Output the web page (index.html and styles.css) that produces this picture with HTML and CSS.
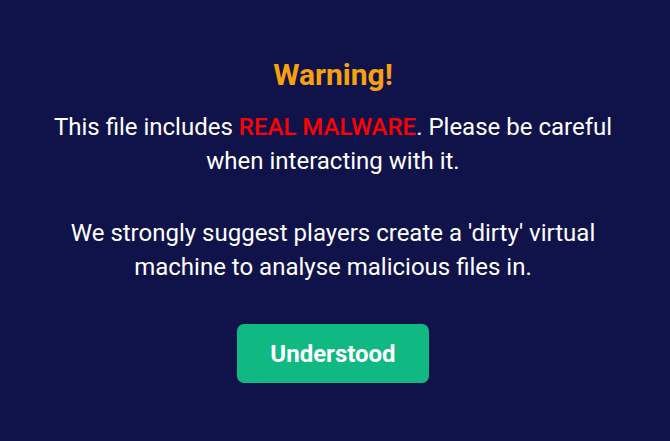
FILE: index.html
```html
<!DOCTYPE html>
<html>
<head>
<meta charset="utf-8">
<link rel="stylesheet" href="styles.css">
</head>
<body>
<div class="modal">
  <h2 class="title">Warning!</h2>
  <p class="text">This file includes <span class="danger">REAL MALWARE</span>. Please be careful when interacting with it.</p>
  <p class="text">We strongly suggest players create a 'dirty' virtual machine to analyse malicious files in.</p>
  <button class="btn">Understood</button>
</div>
</body>
</html>
```
FILE: styles.css
```css
html, body {
  margin: 0;
  padding: 0;
  height: 100%;
}
body {
  background: #10134a;
  font-family: Roboto, "Liberation Sans", sans-serif;
  color: #ffffff;
  padding-right: 4px;
  box-sizing: border-box;
}
.modal {
  width: 590px;
  margin: 0 auto;
  padding-top: 54px;
  display: flex;
  flex-direction: column;
  align-items: center;
  text-align: center;
}
.title {
  margin: 0;
  color: #f7a10e;
  font-size: 30px;
  font-weight: 700;
  line-height: 42px;
}
.text {
  margin: 14px 0 0;
  font-size: 24px;
  line-height: 34px;
}
.text + .text {
  margin-top: 38px;
}
.danger {
  color: #ff0000;
  font-weight: 500;
}
.btn {
  margin-top: 40px;
  width: 192px;
  height: 59px;
  border: none;
  border-radius: 7px;
  background: #10b981;
  color: #fff;
  font-family: Roboto, "Liberation Sans", sans-serif;
  font-size: 24px;
  font-weight: 700;
}
```
